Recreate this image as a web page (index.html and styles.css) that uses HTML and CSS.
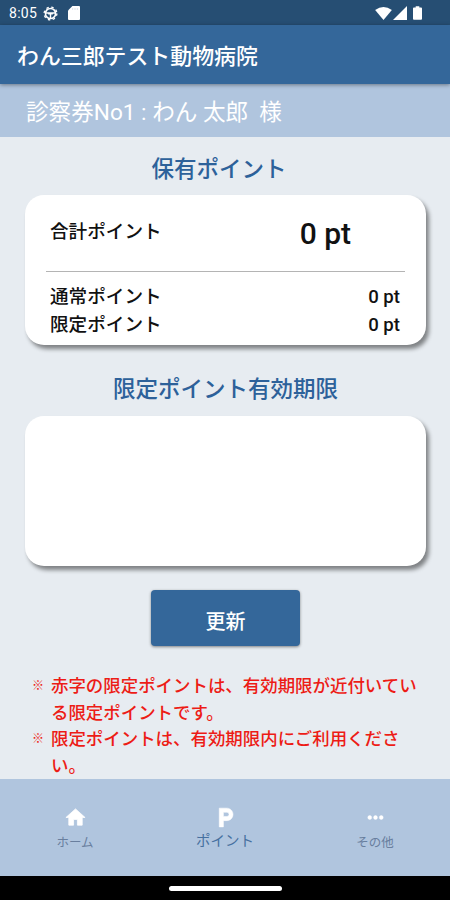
FILE: index.html
```html
<!DOCTYPE html>
<html lang="ja">
<head>
<meta charset="utf-8">
<title>ポイント</title>
<link rel="stylesheet" href="styles.css">
</head>
<body>
<div class="screen">
  <div class="status">
    <span class="clock">8:05</span>
    <svg class="gear" viewBox="0 0 16 16"><circle cx="8" cy="8" r="5.4" fill="none" stroke="#fff" stroke-width="1.7"/><circle cx="8" cy="8" r="6.8" fill="none" stroke="#fff" stroke-width="1.4" stroke-dasharray="2.600 2.740"/><path d="M3 7.500h10M8 8v5M5.500 8.200h5" fill="none" stroke="#fff" stroke-width="1.5"/></svg>
    <svg class="sd" viewBox="0 0 12 14"><path d="M4.4 0H11q1 0 1 1v12q0 1-1 1H1q-1 0-1-1V4.4z" fill="#fff"/><path d="M4.7 2v2M7 2v2M9.3 2v2" stroke="#d3dbe4" stroke-width=".8"/></svg>
    <span class="spacer"></span>
    <svg class="wifi" viewBox="0 0 18 14"><path d="M0 3.2Q9-3 18 3.2L9 14z" fill="#fff"/></svg>
    <svg class="signal" viewBox="0 0 14 14"><path d="M14 0v14H0z" fill="#fff"/></svg>
    <svg class="battery" viewBox="0 0 10 15"><path d="M3 0h4v1.5h2q1 0 1 1V14q0 1-1 1H1q-1 0-1-1V2.500q0-1 1-1h2z" fill="#fff"/></svg>
  </div>
  <header class="appbar">わん三郎テスト動物病院</header>
  <div class="patient">診察券No1 : わん 太郎&nbsp; 様</div>
  <main class="content">
    <h2 class="heading first">保有ポイント</h2>
    <section class="card">
      <div class="total"><span>合計ポイント</span><span class="total-value">0 pt</span></div>
      <div class="row"><span>通常ポイント</span><span class="value">0 pt</span></div>
      <div class="row"><span>限定ポイント</span><span class="value">0 pt</span></div>
    </section>
    <h2 class="heading second">限定ポイント有効期限</h2>
    <section class="card"></section>
    <button class="update">更新</button>
    <ul class="notes">
      <li><span class="mark">※</span><span>赤字の限定ポイントは、有効期限が近付いてい<br>る限定ポイントです。</span></li>
      <li><span class="mark">※</span><span>限定ポイントは、有効期限内にご利用くださ<br>い。</span></li>
    </ul>
  </main>
  <nav class="tabs">
    <div class="tab">
      <svg viewBox="0 0 24 24"><path d="M10 20v-6h4v6h5v-8h3L12 3 2 12h3v8z" fill="#fff" stroke="#fff" stroke-width=".8" stroke-linejoin="round"/></svg>
      <span>ホーム</span>
    </div>
    <div class="tab active">
      <svg viewBox="0 0 24 24"><path d="M13.200 3H6v18h4v-6h3.200c3.300 0 6-2.700 6-6s-2.700-6-6-6zm.2 8H10V7h3.400a2 2 0 0 1 0 4z" fill="#fff" stroke="#fff" stroke-width=".5"/></svg>
      <span>ポイント</span>
    </div>
    <div class="tab">
      <svg viewBox="0 0 24 24"><path d="M6 10a2 2 0 1 0 0 4 2 2 0 0 0 0-4zm12 0a2 2 0 1 0 0 4 2 2 0 0 0 0-4zm-6 0a2 2 0 1 0 0 4 2 2 0 0 0 0-4z" fill="#fff" stroke="#fff" stroke-width=".5"/></svg>
      <span>その他</span>
    </div>
  </nav>
  <div class="gesture"><span class="pill"></span></div>
</div>
</body>
</html>
```
FILE: styles.css
```css
* { box-sizing: border-box; }
body { margin: 0; font-family: Roboto, "Noto Sans CJK JP", sans-serif; }
.screen {
  width: 450px;
  height: 900px;
  display: flex;
  flex-direction: column;
  overflow: hidden;
  background: #e7ecf1;
}
.status {
  flex: none;
  height: 25px;
  display: flex;
  align-items: center;
  padding: 1px 28px 0 9px;
  background: #264e73;
  color: #fff;
}
.clock { width: 34px; font-size: 14px; letter-spacing: .3px; }
.gear { width: 15px; height: 15px; }
.sd { width: 12px; height: 14px; margin-left: 10px; }
.spacer { flex: 1; }
.wifi { width: 17px; height: 13px; }
.signal { width: 14px; height: 14px; margin-left: 1px; }
.battery { width: 9px; height: 14px; margin-left: 6px; }
.appbar {
  flex: none;
  height: 59px;
  padding-left: 17px;
  background: #34679a;
  color: #fff;
  font-size: 21.9px;
  font-weight: 500;
  line-height: 64px;
  z-index: 1;
  box-shadow: 0 1px 4px rgba(0, 0, 0, .4);
}
.patient {
  flex: none;
  height: 53px;
  padding-left: 26px;
  background: #b0c5de;
  color: #fff;
  font-size: 22.6px;
  line-height: 58px;
}
.content {
  flex: none;
  height: 642px;
  padding: 14px 24px 0 25px;
  display: flex;
  flex-direction: column;
}
.heading {
  margin: 0;
  height: 44px;
  line-height: 36px;
  text-align: center;
  color: #2d619a;
  font-size: 22.5px;
  font-weight: 500;
}
.heading.first { padding-right: 13px; }
.heading.second { margin-top: 26px; height: 45px; }
.card {
  height: 150px;
  flex: none;
  padding: 0 21px;
  border-radius: 19px;
  background: #fff;
  box-shadow: 3px 4px 4px rgba(0, 0, 0, .45);
  color: #111;
  font-size: 18.600px;
  font-weight: 500;
}
.heading.second + .card { margin-top: 1px; }
.total {
  height: 77px;
  display: flex;
  justify-content: space-between;
  padding: 0 54px 0 4px;
  line-height: 75px;
  border-bottom: 1px solid #b4b4b4;
}
.total-value { font-size: 30px; line-height: 77px; }
.row {
  display: flex;
  justify-content: space-between;
  height: 28px;
  padding: 0 5px 0 4px;
  line-height: 28px;
}
.total + .row { margin-top: 11px; }
.update {
  align-self: center;
  width: 149px;
  height: 56px;
  flex: none;
  margin-top: 24px;
  padding: 4px 0 0;
  border: 0;
  border-radius: 4px;
  background: #34679a;
  box-shadow: 0 1px 3px rgba(0, 0, 0, .45);
  color: #fff;
  font: 500 20px Roboto, "Noto Sans CJK JP", sans-serif;
}
.notes {
  margin: 27px 0 0;
  padding: 0 0 0 7px;
  list-style: none;
  color: #ed1c16;
  font-size: 17.450px;
  font-weight: 500;
  line-height: 26.400px;
  white-space: nowrap;
}
.notes li { display: flex; }
.mark { width: 19px; flex: none; font-size: 12px; font-weight: 700; }
.tabs {
  flex: none;
  height: 97px;
  display: grid;
  grid-template-columns: repeat(3, 1fr);
  background: #b0c5de;
}
.tab {
  display: flex;
  flex-direction: column;
  align-items: center;
  padding-top: 27px;
  color: #697f9e;
  font-size: 12.500px;
}
.tab svg { width: 23px; height: 23px; }
.tab span { line-height: 20px; margin-top: 4px; }
.tab.active { color: #46709f; font-size: 14.500px; }
.tab.active svg { width: 25px; height: 25px; margin-top: -1px; }
.tab.active span { margin-top: 2px; }
.gesture {
  flex: none;
  height: 24px;
  display: flex;
  justify-content: center;
  align-items: center;
  background: #000;
}
.pill { width: 113px; height: 5px; border-radius: 3px; background: #fff; }
```
